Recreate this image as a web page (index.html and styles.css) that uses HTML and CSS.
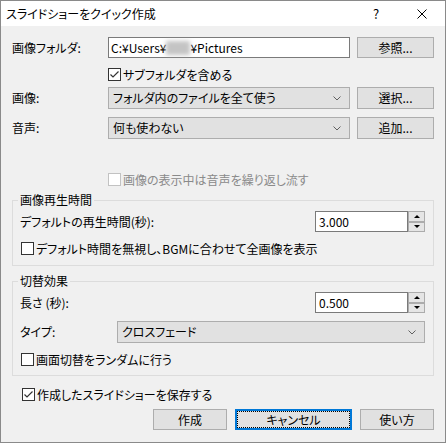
FILE: index.html
```html
<!DOCTYPE html>
<html lang="ja">
<head>
<meta charset="utf-8">
<title>スライドショーをクイック作成</title>
<link rel="stylesheet" href="styles.css">
</head>
<body>
<div class="window">
  <div class="titlebar">
    <span class="title">スライドショーをクイック作成</span>
    <span class="cap help">?</span>
    <span class="cap close"><svg width="10" height="10" viewBox="0 0 10 10"><path d="M0.5 0.5L9.5 9.5M9.5 0.5L0.5 9.5" stroke="#000" stroke-width="1" fill="none"/></svg></span>
  </div>
  <div class="content">
    <div class="row r-folder">
      <span class="label">画像フォルダ:</span>
      <div class="textbox wide">C:¥Users¥<span class="blur"></span>¥Pictures</div>
      <div class="btn side">参照...</div>
    </div>
    <div class="row r-sub indent">
      <span class="check"><span class="box"><svg width="11" height="11" viewBox="0 0 11 11"><path d="M1.5 5.5L4 8L9.5 2.5" stroke="#333" stroke-width="1.2" fill="none"/></svg></span>サブフォルダを含める</span>
    </div>
    <div class="row r-image">
      <span class="label">画像:</span>
      <div class="combo wide"><span>フォルダ内のファイルを全て使う</span><svg class="chev" width="8" height="5" viewBox="0 0 8 5"><path d="M0.5 0.5L4 4L7.5 0.5" stroke="#606060" stroke-width="1" fill="none"/></svg></div>
      <div class="btn side">選択...</div>
    </div>
    <div class="row r-audio">
      <span class="label">音声:</span>
      <div class="combo wide"><span>何も使わない</span><svg class="chev" width="8" height="5" viewBox="0 0 8 5"><path d="M0.5 0.5L4 4L7.5 0.5" stroke="#606060" stroke-width="1" fill="none"/></svg></div>
      <div class="btn side">追加...</div>
    </div>
    <div class="row r-loop indent">
      <span class="check disabled"><span class="box"></span>画像の表示中は音声を繰り返し流す</span>
    </div>

    <fieldset class="group g-time">
      <legend>画像再生時間</legend>
      <div class="row">
        <span class="glabel">デフォルトの再生時間(秒):</span>
        <div class="spinbox"><div class="spin-input">3.000</div><div class="spin"><span class="up"></span><span class="down"></span></div></div>
      </div>
      <div class="row g-check">
        <span class="check"><span class="box"></span>デフォルト時間を無視し、BGMに合わせて全画像を表示</span>
      </div>
    </fieldset>

    <fieldset class="group g-trans">
      <legend>切替効果</legend>
      <div class="row">
        <span class="glabel">長さ (秒):</span>
        <div class="spinbox"><div class="spin-input">0.500</div><div class="spin"><span class="up"></span><span class="down"></span></div></div>
      </div>
      <div class="row g-type">
        <span class="tlabel">タイプ:</span>
        <div class="combo grow"><span>クロスフェード</span><svg class="chev" width="8" height="5" viewBox="0 0 8 5"><path d="M0.5 0.5L4 4L7.5 0.5" stroke="#606060" stroke-width="1" fill="none"/></svg></div>
      </div>
      <div class="row g-check">
        <span class="check"><span class="box"></span>画面切替をランダムに行う</span>
      </div>
    </fieldset>

    <div class="row r-save">
      <span class="check"><span class="box"><svg width="11" height="11" viewBox="0 0 11 11"><path d="M1.5 5.5L4 8L9.5 2.5" stroke="#333" stroke-width="1.2" fill="none"/></svg></span>作成したスライドショーを保存する</span>
    </div>

    <div class="row footer">
      <div class="btn b-create">作成</div>
      <div class="btn b-cancel focused">キャンセル</div>
      <div class="btn b-help">使い方</div>
    </div>
  </div>
</div>
</body>
</html>
```

FILE: styles.css
```css
* { box-sizing: border-box; }
html, body { margin: 0; padding: 0; }
body {
  font-family: "Noto Sans CJK JP", sans-serif;
  font-size: 12px;
  line-height: 14px;
  color: #000;
  font-feature-settings: "palt";
  background: #ffffff;
}
.window {
  width: 446px;
  height: 443px;
  border: 1px solid #8a8a8a;
  background: #f0f0f0;
  display: flex;
  flex-direction: column;
}
.titlebar {
  height: 25px;
  flex-shrink: 0;
  background: #ffffff;
  display: flex;
  align-items: center;
}
.title { flex: 1; padding-left: 5px; }
.cap {
  width: 46px;
  height: 25px;
  display: flex;
  align-items: center;
  justify-content: center;
}
.help { font-size: 13px; }
.content {
  padding: 0 11px;
  display: flex;
  flex-direction: column;
}
.row { display: flex; align-items: center; }
.label { width: 96px; flex-shrink: 0; }
.indent { padding-left: 96px; }

.textbox {
  height: 21px;
  background: #ffffff;
  border: 1px solid #7a7a7a;
  padding-left: 2px;
  display: flex;
  align-items: center;
  white-space: nowrap;
}
.wide { width: 242px; flex-shrink: 0; }
.blur {
  display: inline-block;
  width: 24px;
  height: 14px;
  background: #c4c4c4;
  filter: blur(2px);
}
.btn {
  height: 22px;
  background: #e1e1e1;
  border: 1px solid #adadad;
  display: flex;
  align-items: center;
  justify-content: center;
  flex-shrink: 0;
  position: relative;
}
.side { width: 77px; margin-left: 7px; }
.r-folder { margin-top: 11px; height: 21px; }
.r-folder .btn { height: 21px; }

.combo {
  height: 22px;
  background: #e1e1e1;
  border: 1px solid #adadad;
  padding: 0 8px 0 4px;
  display: flex;
  align-items: center;
  justify-content: space-between;
}
.grow { flex: 1; }
.chev { display: block; }

.check { display: flex; align-items: center; white-space: nowrap; }
.box {
  width: 13px;
  height: 13px;
  border: 1px solid #333333;
  background: #ffffff;
  margin-right: 2px;
  display: flex;
  align-items: center;
  justify-content: center;
  flex-shrink: 0;
}
.disabled { color: #8a8a8a; }
.disabled .box { border-color: #c2c2c2; }

.r-sub { margin-top: 10px; height: 13px; }
.r-image { margin-top: 6px; height: 22px; }
.r-audio { margin-top: 8px; height: 22px; }
.r-loop { margin-top: 34px; height: 13px; }

.group {
  margin: 0;
  min-width: 0;
  border: 1px solid #dcdcdc;
  padding: 4px 8px 10px 7px;
}
.group legend {
  padding: 0 2px;
  margin-left: -2px;
  line-height: 14px;
}
.g-time { margin-top: 7px; }
.g-trans { margin-top: 8px; padding-bottom: 9px; }
.glabel { flex: 1; }
.tlabel { width: 97px; flex-shrink: 0; }
.g-check { margin-top: 10px; height: 13px; padding-left: 1px; }
.g-type { margin-top: 8px; height: 22px; }

.spinbox { display: flex; height: 21px; }
.spin-input {
  width: 93px;
  height: 21px;
  background: #ffffff;
  border: 1px solid #7a7a7a;
  padding-left: 3px;
  display: flex;
  align-items: center;
}
.spin {
  width: 17px;
  height: 21px;
  display: flex;
  flex-direction: column;
}
.spin span {
  flex: 1;
  border: 1px solid #acacac;
  background: #e5e5e5;
  display: flex;
  align-items: center;
  justify-content: center;
}
.spin .up::before {
  content: "";
  border-left: 3px solid transparent;
  border-right: 3px solid transparent;
  border-bottom: 3px solid #000;
}
.spin .down::before {
  content: "";
  border-left: 3px solid transparent;
  border-right: 3px solid transparent;
  border-top: 3px solid #000;
}

.r-save { margin-top: 12px; height: 13px; padding-left: 10px; }
.footer { margin-top: 8px; justify-content: flex-end; height: 21px; }
.footer .btn { height: 21px; }
.b-create { width: 74px; }
.b-cancel { width: 117px; margin-left: 8px; }
.b-help { width: 74px; margin-left: 8px; }
.focused { border: 2px solid #0078d7; }
.focused::after {
  content: "";
  position: absolute;
  inset: 0;
  border: 1px dotted #000;
}
```
